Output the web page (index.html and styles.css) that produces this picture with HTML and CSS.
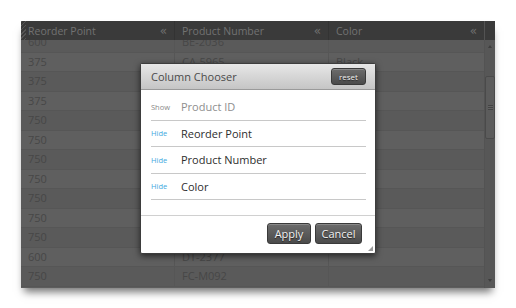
FILE: index.html
```html
<!DOCTYPE html>
<html lang="en">
<head>
    <meta charset="UTF-8">
    <title>Column Chooser</title>
    <link rel="stylesheet" href="styles.css">
</head>
<body>
    <div class="stage">
        <div class="grid">
            <div class="grid-main">
                <div class="grid-head">
                    <div class="hcell first"><span class="hatch"></span><span>Reorder Point</span><span class="collapse">&laquo;</span></div>
                    <div class="hcell"><span>Product Number</span><span class="collapse">&laquo;</span></div>
                    <div class="hcell"><span>Color</span><span class="collapse">&laquo;</span></div>
                </div>
                <div class="grid-body">
                    <div class="rows">
                        <div class="row"><div class="cell">600</div><div class="cell">BE-2036</div><div class="cell"></div></div>
                        <div class="row"><div class="cell">375</div><div class="cell">CA-5965</div><div class="cell">Black</div></div>
                        <div class="row"><div class="cell">375</div><div class="cell"></div><div class="cell"></div></div>
                        <div class="row"><div class="cell">375</div><div class="cell"></div><div class="cell"></div></div>
                        <div class="row"><div class="cell">750</div><div class="cell"></div><div class="cell"></div></div>
                        <div class="row"><div class="cell">750</div><div class="cell"></div><div class="cell"></div></div>
                        <div class="row"><div class="cell">750</div><div class="cell"></div><div class="cell"></div></div>
                        <div class="row"><div class="cell">750</div><div class="cell"></div><div class="cell"></div></div>
                        <div class="row"><div class="cell">750</div><div class="cell"></div><div class="cell"></div></div>
                        <div class="row"><div class="cell">750</div><div class="cell"></div><div class="cell"></div></div>
                        <div class="row"><div class="cell">750</div><div class="cell"></div><div class="cell"></div></div>
                        <div class="row"><div class="cell">600</div><div class="cell">DT-2377</div><div class="cell"></div></div>
                        <div class="row"><div class="cell">750</div><div class="cell">FC-M092</div><div class="cell"></div></div>
                    </div>
                </div>
            </div>
            <div class="scrollbar">
                <div class="head-pad"></div>
                <div class="arrow up"></div>
                <div class="track"><div class="thumb"><span class="grip"></span></div></div>
                <div class="arrow down"></div>
            </div>
        </div>

        <div class="dialog">
            <div class="dialog-head">
                <span class="dialog-title">Column Chooser</span>
                <button class="btn small">reset</button>
            </div>
            <div class="dialog-body">
                <div class="choice"><span class="toggle show">Show</span><span class="name off">Product ID</span></div>
                <div class="choice"><span class="toggle">Hide</span><span class="name">Reorder Point</span></div>
                <div class="choice"><span class="toggle">Hide</span><span class="name">Product Number</span></div>
                <div class="choice"><span class="toggle">Hide</span><span class="name">Color</span></div>
            </div>
            <div class="dialog-foot">
                <button class="btn apply">Apply</button>
                <button class="btn">Cancel</button>
                <span class="grip-corner"></span>
            </div>
        </div>
    </div>
</body>
</html>
```

FILE: styles.css
```css
* {
    box-sizing: border-box;
    margin: 0;
    padding: 0;
}
html, body {
    background: #fff;
    font-family: "Open Sans", "Noto Sans", sans-serif;
}
.stage {
    position: relative;
    width: 516px;
    height: 308px;
    padding: 21px 0 0 21px;
}
.grid {
    display: flex;
    width: 474px;
    height: 267px;
    background: #5d5d5d;
    box-shadow: 0 7px 8px -3px rgba(0, 0, 0, 0.55);
}
.grid-main {
    width: 463px;
    display: flex;
    flex-direction: column;
}
.grid-head {
    display: flex;
    height: 19px;
    background: #3a3a3a;
}
.hcell {
    display: flex;
    align-items: center;
    justify-content: space-between;
    width: 154px;
    padding: 0 7px 0 7px;
    border-right: 1px solid #333;
    color: #727272;
    font-size: 10.5px;
}
.hcell:last-child {
    width: 155px;
    border-right: none;
}
.hcell.first {
    position: relative;
}
.hatch {
    position: absolute;
    left: 0;
    top: 0;
    width: 5px;
    height: 19px;
    background: repeating-linear-gradient(135deg, #555 0 1px, #3a3a3a 1px 3px);
}
.collapse {
    font-family: "DejaVu Sans", sans-serif;
    font-size: 12px;
    line-height: 12px;
    color: #707070;
}
.grid-body {
    flex: 1;
    overflow: hidden;
}
.rows {
    margin-top: -7px;
}
.row {
    display: flex;
    height: 19.5px;
    border-bottom: 1px solid #565656;
}
.row:nth-child(odd) {
    background: #5a5a5a;
}
.row:nth-child(even) {
    background: #5f5f5f;
}
.cell {
    width: 154px;
    padding: 0 7px;
    line-height: 18px;
    font-size: 11px;
    color: #474747;
    border-right: 1px solid #565656;
}
.cell:last-child {
    width: 155px;
    border-right: none;
}
.scrollbar {
    width: 11px;
    display: flex;
    flex-direction: column;
    background: #575757;
    border-left: 1px solid #535353;
}
.head-pad {
    height: 19px;
    background: #3a3a3a;
}
.arrow {
    height: 14px;
    position: relative;
}
.arrow::after {
    content: "";
    position: absolute;
    left: 3px;
    top: 5px;
    border-left: 2px solid transparent;
    border-right: 2px solid transparent;
}
.arrow.up::after {
    border-bottom: 3px solid #3e3e3e;
}
.arrow.down::after {
    border-top: 3px solid #3e3e3e;
}
.track {
    flex: 1;
    padding-top: 22px;
}
.thumb {
    display: flex;
    align-items: center;
    justify-content: center;
    height: 63px;
    border: 1px solid #4a4a4a;
    border-radius: 2px;
    background: #5c5c5c;
}
.grip {
    width: 5px;
    height: 5px;
    background: repeating-linear-gradient(#444 0 1px, #626262 1px 2px);
}

.dialog {
    position: absolute;
    left: 140px;
    top: 63px;
    width: 236px;
    height: 191px;
    background: #fff;
    border: 1px solid #3d3d3d;
    border-radius: 2px;
    box-shadow: 0 2px 6px rgba(0, 0, 0, 0.6);
    display: flex;
    flex-direction: column;
}
.dialog-head {
    display: flex;
    align-items: center;
    justify-content: space-between;
    height: 26px;
    padding: 0 9px 0 10px;
    background: linear-gradient(#e7e7e7, #c5c5c5);
    border-bottom: 1px solid #9a9a9a;
}
.dialog-title {
    font-size: 11px;
    color: #4a4a4a;
}
.btn {
    font-family: "Open Sans", "Noto Sans", sans-serif;
    font-size: 11px;
    color: #f2f2f2;
    text-shadow: 0 1px 1px rgba(0, 0, 0, 0.6);
    background: linear-gradient(#6c6c6c, #4b4b4b);
    border: 1px solid #3a3a3a;
    border-radius: 3px;
    box-shadow: inset 0 1px 0 rgba(255, 255, 255, 0.2);
    height: 21px;
    width: 47px;
}
.btn.apply {
    width: 44px;
}
.btn.small {
    font-size: 8px;
    height: 17px;
    width: 35px;
}
.dialog-body {
    padding: 4px 9px 0 10px;
}
.choice {
    display: flex;
    align-items: center;
    height: 26.5px;
    border-bottom: 1px solid #c8c8c8;
}
.toggle {
    width: 30px;
    font-size: 7.5px;
    color: #3fa9e0;
}
.toggle.show {
    color: #8a8a8a;
}
.name {
    font-size: 11px;
    color: #2e2e2e;
}
.name.off {
    color: #8e8e8e;
}
.dialog-foot {
    position: relative;
    flex: 1;
    margin-top: 15px;
    border-top: 1px solid #d0d0d0;
    display: flex;
    justify-content: flex-end;
    align-items: flex-start;
    gap: 4px;
    padding: 7px 13px 0 0;
}
.grip-corner {
    position: absolute;
    right: 2px;
    bottom: 2px;
    width: 0;
    height: 0;
    border-left: 5px solid transparent;
    border-bottom: 5px solid #9a9a9a;
}
```
